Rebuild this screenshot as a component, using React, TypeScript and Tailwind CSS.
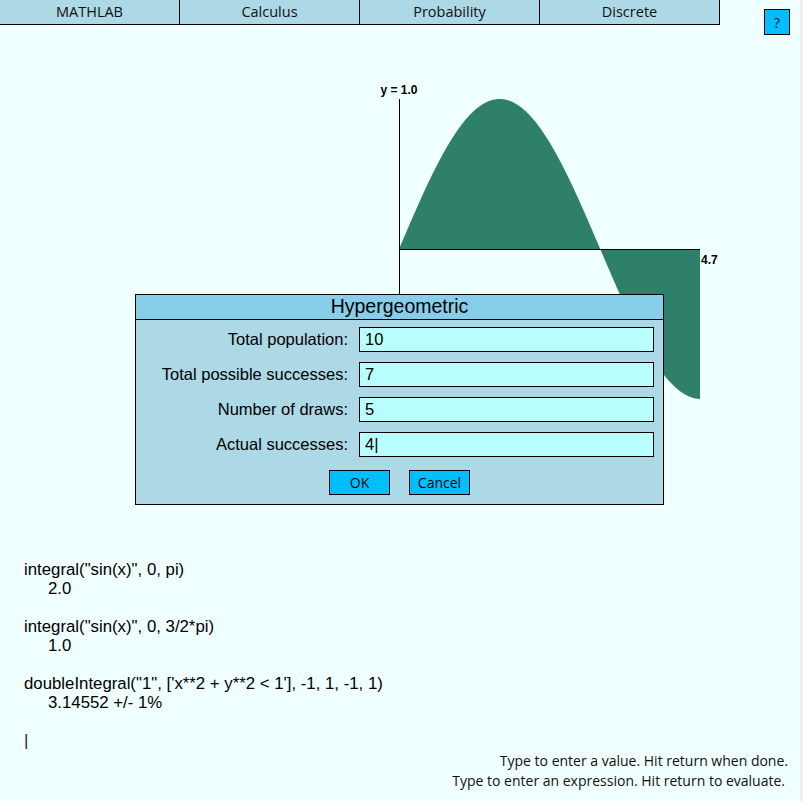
const tabs = ["MATHLAB", "Calculus", "Probability", "Discrete"]

const fields = [
  { label: "Total population:", value: "10" },
  { label: "Total possible successes:", value: "7" },
  { label: "Number of draws:", value: "5" },
  { label: "Actual successes:", value: "4|" },
]

const history = [
  { expr: 'integral("sin(x)", 0, pi)', result: "2.0" },
  { expr: 'integral("sin(x)", 0, 3/2*pi)', result: "1.0" },
  { expr: "doubleIntegral(\"1\", ['x**2 + y**2 < 1'], -1, 1, -1, 1)", result: "3.14552 +/- 1%" },
]

// sin(x) on [0, 4.7], 64px per unit across, 150px per unit up
function areaPath() {
  const ox = 29
  const oy = 169
  let d = `M${ox},${oy}`
  for (let i = 0; i <= 301; i++) {
    const x = (i / 301) * 4.7
    d += ` L${ox + i},${(oy - 150 * Math.sin(x)).toFixed(2)}`
  }
  d += ` L${ox + 301},${oy} Z`
  return d
}

function Graph() {
  return (
    <svg width="360" height="330" viewBox="0 0 360 330" className="block">
      <path d={areaPath()} fill="#2e806a" />
      <line x1="29.5" y1="19" x2="29.5" y2="319" stroke="#000" strokeWidth="1" shapeRendering="crispEdges" />
      <line x1="29" y1="169.5" x2="330" y2="169.5" stroke="#000" strokeWidth="1" shapeRendering="crispEdges" />
      <text x="29" y="14" textAnchor="middle" fontFamily="Liberation Sans, Arial, sans-serif" fontSize="12" fontWeight="bold" fill="#000">
        y = 1.0
      </text>
      <text x="331" y="184" fontFamily="Liberation Sans, Arial, sans-serif" fontSize="12" fontWeight="bold" fill="#000">
        4.7
      </text>
    </svg>
  )
}

function Dialog() {
  return (
    <div className="absolute left-[135px] top-[294px] w-[529px] h-[211px] border border-black bg-[#add8e6] flex flex-col font-['Liberation_Sans',Arial,sans-serif] text-black">
      <div className="h-[25px] bg-[#87ceeb] border-b border-black flex items-center justify-center text-[19.5px] leading-none">
        Hypergeometric
      </div>
      <div className="grid grid-cols-[212px_295px] gap-x-[11px] gap-y-[10px] pt-[7px]">
        {fields.map((f) => (
          <div key={f.label} className="contents">
            <div className="h-[25px] flex items-center justify-end text-[16.5px]">{f.label}</div>
            <div className="h-[25px] border border-black bg-[#b9ffff] flex items-center pl-[5px] text-[16.5px]">
              {f.value}
            </div>
          </div>
        ))}
      </div>
      <div className="flex justify-center gap-[19px] mt-[13px] font-['Open_Sans',sans-serif] text-[14px]">
        <button className="w-[61px] h-[25px] border border-black bg-[#00bfff] flex items-center justify-center">OK</button>
        <button className="w-[61px] h-[25px] border border-black bg-[#00bfff] flex items-center justify-center">Cancel</button>
      </div>
    </div>
  )
}

export default function App() {
  return (
    <div className="flex w-full h-[801px] bg-[#f0ffff] overflow-hidden">
      <main className="relative w-[800px] h-full flex flex-col">
        <div className="flex items-start">
          {tabs.map((t) => (
            <div
              key={t}
              className="w-[180px] h-[25px] border-b border-r border-black bg-[#add8e6] flex items-center justify-center font-['Open_Sans',sans-serif] text-[14.5px] text-[#111]"
            >
              {t}
            </div>
          ))}
          <button className="ml-auto mt-[9px] mr-[10px] w-[26px] h-[26px] border border-black bg-[#00bfff] flex items-center justify-center font-['Open_Sans',sans-serif] text-[14px] text-[#111]">
            ?
          </button>
        </div>

        <div className="pl-[370px] mt-[45px]">
          <Graph />
        </div>

        <div className="mt-[150px] pl-[24px] font-['Liberation_Sans',Arial,sans-serif] text-[16.8px] leading-[19px] text-black">
          {history.map((h) => (
            <div key={h.expr} className="mb-[19px]">
              <div>{h.expr}</div>
              <div className="pl-[24px]">{h.result}</div>
            </div>
          ))}
          <div className="text-[#2a1a2a]">|</div>
        </div>

        <div className="mt-auto pb-[10px] flex flex-col items-end font-['Open_Sans',sans-serif] text-[14px] leading-[20px] text-[#111]">
          <div className="pr-[12px]">Type to enter a value. Hit return when done.</div>
          <div className="pr-[15px]">Type to enter an expression. Hit return to evaluate.</div>
        </div>

        <Dialog />
      </main>
      <div className="w-[3px] h-full bg-[#f0f0f0]" />
    </div>
  )
}
